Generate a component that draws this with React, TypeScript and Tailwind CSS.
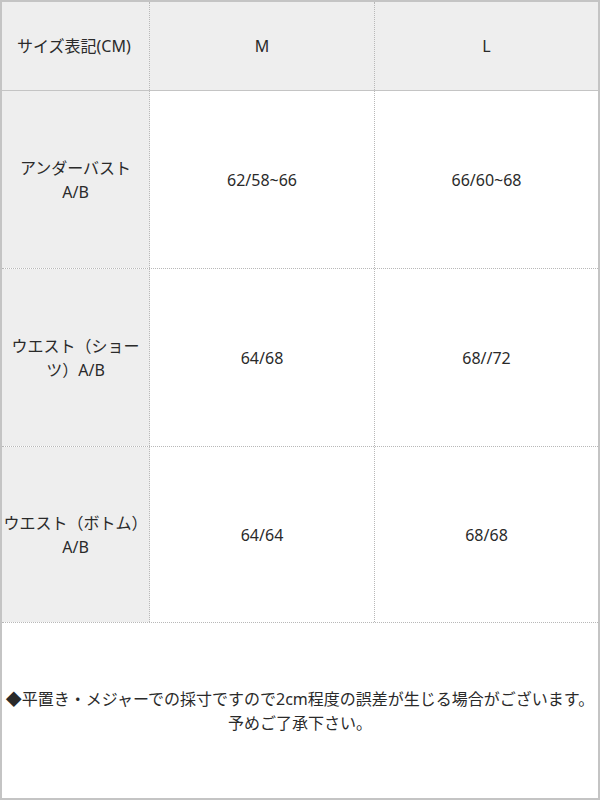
import React from 'react'

const rows = [
  { label: <>アンダーバスト<br />A/B</>, m: '62/58~66', l: '66/60~68', h: 'h-[178px]' },
  { label: <>ウエスト（ショー<br />ツ）A/B</>, m: '64/68', l: '68//72', h: 'h-[178px]' },
  { label: <>ウエスト（ボトム）<br />A/B</>, m: '64/64', l: '68/68', h: 'h-[176px]' },
]

const App: React.FC = () => {
  return (
    <div
      className="w-[600px] h-[800px] flex flex-col border-2 border-[#c4c4c4] bg-white text-[16px] leading-[24px] text-[#2a2a2a]"
      style={{ fontFamily: '"Noto Sans", "Noto Sans CJK JP", sans-serif' }}
    >
      {/* header */}
      <div className="grid grid-cols-[148px_225px_1fr] h-[89px] bg-[#eeeeee] border-b border-[#c4c4c4]">
        <div className="flex items-center pl-[15px] border-r border-dotted border-[#b8b8b8]">サイズ表記(CM)</div>
        <div className="flex items-center justify-center border-r border-dotted border-[#b8b8b8]">M</div>
        <div className="flex items-center justify-center">L</div>
      </div>

      {rows.map((r, i) => (
        <div key={i} className={`grid grid-cols-[148px_225px_1fr] ${r.h} border-b border-dotted border-[#b8b8b8]`}>
          <div className="flex items-center justify-center text-center bg-[#eeeeee] border-r border-dotted border-[#b8b8b8]">
            <span>{r.label}</span>
          </div>
          <div className="flex items-center justify-center border-r border-dotted border-[#b8b8b8]">{r.m}</div>
          <div className="flex items-center justify-center">{r.l}</div>
        </div>
      ))}

      {/* note */}
      <div className="flex-1 flex items-center justify-center text-center">
        <p>
          <span className="whitespace-nowrap">◆平置き・メジャーでの採寸ですので2cm程度の誤差が生じる場合がございます。</span>
          <br />
          予めご了承下さい。
        </p>
      </div>
    </div>
  )
}

export default App
